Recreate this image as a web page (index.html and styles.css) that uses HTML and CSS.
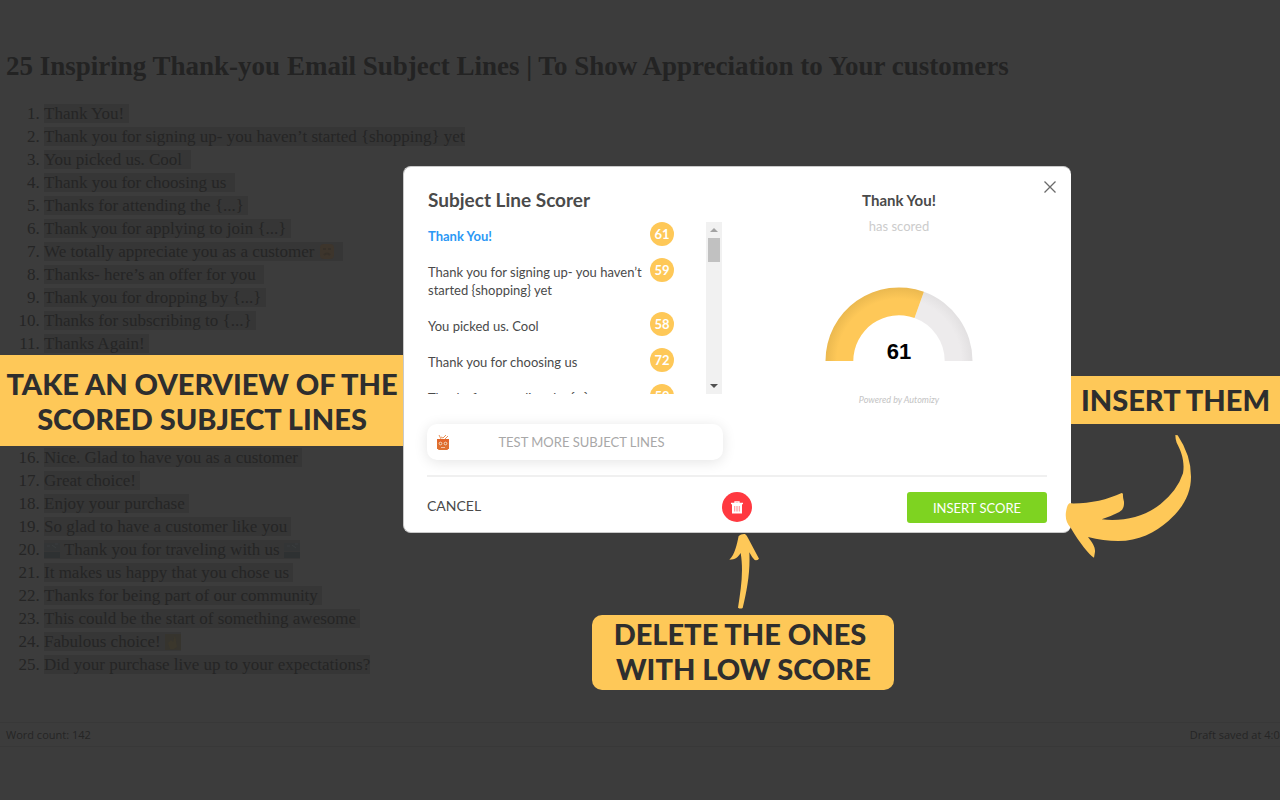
FILE: index.html
```html
<!DOCTYPE html>
<html lang="en">
<head>
<meta charset="utf-8">
<title>Subject Line Scorer</title>
<link rel="stylesheet" href="styles.css">
</head>
<body>
<main class="editor">
  <h1 class="post-title">25 Inspiring Thank-you Email Subject Lines | To Show Appreciation to Your customers</h1>
  <ol class="lines">
    <li><span class="mark">Thank You! </span></li>
    <li><span class="mark">Thank you for signing up- you haven’t started {shopping} yet</span></li>
    <li><span class="mark">You picked us. Cool&nbsp; </span></li>
    <li><span class="mark">Thank you for choosing us&nbsp; </span></li>
    <li><span class="mark">Thanks for attending the {...} </span></li>
    <li><span class="mark">Thank you for applying to join {...} </span></li>
    <li><span class="mark">We totally appreciate you as a customer <svg class="emoji" viewBox="0 0 16 16" aria-hidden="true"><rect x="1" width="14" height="15" rx="4" fill="#3d352c"/><path d="M4 5h3M9 5h3M5 11q3-3 6 0" stroke="#363029" stroke-width="2" fill="none"/></svg>&nbsp; </span></li>
    <li><span class="mark">Thanks- here’s an offer for you&nbsp; </span></li>
    <li><span class="mark">Thank you for dropping by {...} </span></li>
    <li><span class="mark">Thanks for subscribing to {...} </span></li>
    <li><span class="mark">Thanks Again! </span></li>
  </ol>
  <p class="callout callout-overview">TAKE AN OVERVIEW OF THE<br>SCORED SUBJECT LINES</p>
  <ol class="lines" start="16">
    <li><span class="mark">Nice. Glad to have you as a customer </span></li>
    <li><span class="mark">Great choice! </span></li>
    <li><span class="mark">Enjoy your purchase </span></li>
    <li><span class="mark">So glad to have a customer like you </span></li>
    <li><span class="mark"><svg class="emoji" viewBox="0 0 16 16" aria-hidden="true"><path d="M0 1h16v8H0z" fill="#333536"/><path d="M0 10h16v6H0z" fill="#2e3132"/><path d="M3 4h3M8 3l4 3M11 2h3" stroke="#3a3d3e"/></svg> Thank you for traveling with us <svg class="emoji" viewBox="0 0 16 16" aria-hidden="true"><path d="M0 1h16v8H0z" fill="#333536"/><path d="M0 10h16v6H0z" fill="#2e3132"/><path d="M3 4h3M8 3l4 3M11 2h3" stroke="#3a3d3e"/></svg></span></li>
    <li><span class="mark">It makes us happy that you chose us </span></li>
    <li><span class="mark">Thanks for being part of our community </span></li>
    <li><span class="mark">This could be the start of something awesome </span></li>
    <li><span class="mark">Fabulous choice! <svg class="emoji" viewBox="0 0 16 16" aria-hidden="true"><path d="M0 0h16v16H0z" fill="#36342e"/><path d="M10 1l1 6 1 6-3 2H5L3 9l3-3 2 2z" fill="#3b372c"/></svg></span></li>
    <li><span class="mark">Did your purchase live up to your expectations?</span></li>
  </ol>
</main>
<footer class="status">
  <span>Word count: 142</span>
  <span class="saved">Draft saved at 4:04</span>
</footer>

<section class="modal" role="dialog" aria-labelledby="modal-title">
  <button class="close" type="button" aria-label="Close"><svg viewBox="0 0 12 12" aria-hidden="true"><path d="M.5.5l11 11M11.5.5l-11 11" stroke="#6b6b6b" stroke-width="1.3" fill="none"/></svg></button>
  <div class="columns">
    <div class="scores">
      <h2 id="modal-title" class="modal-title">Subject Line Scorer</h2>
      <div class="scroller">
        <ul class="score-list">
          <li class="score active"><span class="subject">Thank You!</span><span class="badge">61</span></li>
          <li class="score"><span class="subject">Thank you for signing up- you haven’t started {shopping} yet</span><span class="badge">59</span></li>
          <li class="score"><span class="subject">You picked us. Cool</span><span class="badge">58</span></li>
          <li class="score"><span class="subject">Thank you for choosing us</span><span class="badge">72</span></li>
          <li class="score"><span class="subject">Thanks for attending the {...}</span><span class="badge">59</span></li>
        </ul>
        <div class="scrollbar" aria-hidden="true">
          <span class="arrow-up"></span><span class="thumb"></span><span class="arrow-down"></span>
        </div>
      </div>
      <button class="test-more" type="button">
        <svg class="robot" viewBox="0 0 14 17" aria-hidden="true"><path d="M5 5L3 1M9 5l3-3M5 3l2 1 3-3" stroke="#e9935c" fill="none"/><path d="M1 5h12v5H1z" fill="#e2662a"/><path d="M2 9h10v6a1 1 0 0 1-1 1H3a1 1 0 0 1-1-1z" fill="#df7330"/><path d="M1 8h12v7H1z" fill="#df7030"/><circle cx="4.500" cy="9.500" r="1.300" fill="#c9641f" stroke="#fbe3d3" stroke-width=".9"/><circle cx="9.500" cy="9.500" r="1.300" fill="#c9641f" stroke="#fbe3d3" stroke-width=".9"/><path d="M5 13.500h4" stroke="#f3c3a4"/></svg>
        <span class="test-label">TEST MORE SUBJECT LINES</span>
      </button>
    </div>
    <div class="result">
      <h3 class="result-title">Thank You!</h3>
      <p class="result-note">has scored</p>
      <svg class="gauge" viewBox="0 0 148 76" role="img" aria-label="Score 61">
        <defs>
          <radialGradient id="gold" gradientUnits="userSpaceOnUse" cx="74" cy="75" r="74"><stop offset=".84" stop-color="#fec858"/><stop offset="1" stop-color="#eab84f"/></radialGradient>
          <radialGradient id="grey" gradientUnits="userSpaceOnUse" cx="74" cy="75" r="74"><stop offset=".84" stop-color="#edebec"/><stop offset="1" stop-color="#e2e0e1"/></radialGradient>
        </defs>
        <path d="M98.900 5.800A73.500 73.500 0 0 1 147.500 75H119.700A45.700 45.700 0 0 0 89.500 32z" fill="url(#grey)"/>
        <path d="M.5 75A73.500 73.500 0 0 1 98.900 5.800L89.500 32A45.700 45.700 0 0 0 28.300 75z" fill="url(#gold)"/>
        <text x="74" y="73" text-anchor="middle" class="gauge-value">61</text>
      </svg>
      <p class="powered">Powered by Automizy</p>
    </div>
  </div>
  <div class="actions">
    <button class="cancel" type="button">CANCEL</button>
    <button class="delete" type="button" aria-label="Delete"><svg viewBox="0 0 12 13" aria-hidden="true"><path d="M4 2V.8h4V2M0 2.500h12" stroke="#fff" stroke-width="1.300" fill="none"/><path d="M1 3h10v9.500H1z" fill="#fff"/><path d="M3.500 5v5.500M5.200 5v5.500M6.800 5v5.500M8.500 5v5.500" stroke="#ff8f93" stroke-width=".8"/></svg></button>
    <button class="insert" type="button">INSERT SCORE</button>
  </div>
</section>

<p class="callout callout-insert">INSERT THEM</p>
<svg class="arrow-insert" viewBox="75 222 381 375" aria-hidden="true"><path d="M406 225L413 226Q453 286 453 350C453 400 430 443 386 482C345 518 295 543 235 543Q190 543 144 531C157 548 166 560 165 575L162 593C147 584 120 550 92 503Q72 482 79 450Q82 434 88 430C145 432 200 420 245 399L249 401Q248 413 252 425C253 440 249 449 238 456Q215 468 185 478C250 486 315 469 361 433Q412 392 429 340C435 305 424 274 410 248Q406 237 406 225Z" fill="#fec858"/></svg>
<svg class="arrow-delete" viewBox="444 159 96 228" aria-hidden="true"><path d="M476 168Q483 161 495 162Q501 166 504 174L537 236Q532 242 524 240Q515 231 508 217C511 276 501 330 488 384Q481 388 474 383C483 325 491 275 482 219C474 232 466 239 448 239C465 225 471 190 476 168Z" fill="#fec858"/></svg>
<p class="callout callout-delete">DELETE THE ONES<br>&nbsp;WITH LOW SCORE</p>
</body>
</html>
```
FILE: styles.css
```css
* { box-sizing: border-box; }
body {
  margin: 0;
  min-height: 100vh;
  position: relative;
  overflow: hidden;
  background: #3c3c3c;
  color: #252525;
  font-family: "Liberation Serif", serif;
}
h1, h2, h3, p, ol, ul { margin: 0; padding: 0; }
button { border: 0; padding: 0; background: none; font-family: Lato, sans-serif; cursor: pointer; }

/* Editor behind the dialog */
.editor { padding-top: 50px; }
.post-title { padding-left: 6px; font-size: 27px; line-height: 32px; white-space: nowrap; color: #232323; }
.lines { padding-left: 44px; font-size: 17px; line-height: 23px; }
.post-title + .lines { margin-top: 20px; }
.lines li { white-space: pre; }
.mark { background: #363636; }
.emoji { width: 16px; height: 16px; vertical-align: -3px; }
.status {
  display: flex;
  justify-content: space-between;
  margin-top: 46px;
  padding: 0 6px;
  border: solid #383838;
  border-width: 1px 0;
  font: 11px/23px "Open Sans", sans-serif;
  white-space: nowrap;
}
.saved { margin-right: -12px; }

/* Annotation labels */
.callout {
  background: #fec858;
  color: #2e2e2e;
  font: 900 29px/35px Lato, sans-serif;
  text-align: center;
  white-space: nowrap;
}
.callout-overview { width: 404px; padding: 11px 0 10px; }
.callout-insert { position: absolute; left: 1071px; right: 0; top: 376px; padding: 6px 0 7px; }
.callout-delete { position: absolute; left: 592px; top: 615px; width: 302px; padding: 1px 6px 4px 0; border-radius: 10px; }
.arrow-insert { position: absolute; left: 1065px; top: 434px; width: 127px; height: 125px; }
.arrow-delete { position: absolute; left: 728px; top: 533px; width: 32px; height: 76px; }

/* Dialog */
.modal {
  position: absolute;
  left: 403px;
  top: 166px;
  width: 668px;
  padding: 21px 24px 9px 23px;
  border: 1px solid #c9c9c9;
  border-width: 1px 0 1px 1px;
  border-radius: 8px;
  background: #fff;
  color: #4a4a4a;
  font-family: Lato, sans-serif;
}
.close { position: absolute; right: 15px; top: 14px; width: 12px; height: 12px; line-height: 0; }
.close svg { width: 12px; height: 12px; }
.columns { display: grid; grid-template-columns: 1fr 1fr; gap: 28px; padding-bottom: 15px; border-bottom: 2px solid #f0f0f0; }
.modal-title { padding-left: 1px; font-size: 19px; line-height: 24px; }
.scroller { display: flex; justify-content: space-between; height: 172px; margin-top: 10px; padding: 0 1px; overflow: hidden; }
.score-list { list-style: none; width: 246px; }
.score { display: flex; justify-content: space-between; align-items: flex-start; font-size: 13px; line-height: 18px; }
.subject { width: 220px; padding: 5px 0 13px; }
.active .subject { color: #2b98f5; font-weight: 700; }
.badge { width: 24px; border-radius: 12px; background: #fec858; color: #fff; text-align: center; line-height: 24px; font-weight: 700; }
.scrollbar { display: flex; flex-direction: column; align-items: center; width: 16px; padding: 6px 0; background: #f1f1f1; }
.arrow-up, .arrow-down { border: solid transparent; border-width: 0 4px; }
.arrow-up { border-bottom: 4px solid #a3a3a3; }
.arrow-down { margin-top: auto; border-top: 4px solid #505050; }
.thumb { width: 12px; height: 24px; margin-top: 6px; background: #c1c1c1; }
.test-more {
  display: flex;
  align-items: center;
  width: 100%;
  height: 36px;
  margin-top: 30px;
  padding: 0 10px 0 9px;
  border-radius: 10px;
  background: #fff;
  box-shadow: 0 2px 14px rgba(0, 0, 0, .11);
  color: #a8a8a8;
  font-size: 13px;
}
.robot { width: 14px; height: 17px; }
.test-label { flex: 1; }
.result { display: flex; flex-direction: column; align-items: center; }
.result-title { font-size: 15px; line-height: 24px; }
.result-note { margin-top: 4px; font-size: 13px; line-height: 20px; color: #ccc; }
.gauge { width: 148px; height: 76px; margin-top: 50px; }
.gauge-value { font: bold 22px "Liberation Sans", sans-serif; fill: #000; }
.powered { margin-top: 32px; font-size: 9px; line-height: 12px; font-style: italic; color: #c4c4c4; }
.actions { display: flex; align-items: flex-start; justify-content: space-between; padding-top: 15px; }
.cancel { width: 140px; text-align: left; font-size: 14px; line-height: 28px; color: #4a4a4a; }
.delete { display: flex; align-items: center; justify-content: center; width: 30px; height: 30px; border-radius: 50%; background: #ff3940; }
.delete svg { width: 12px; height: 13px; }
.insert { width: 140px; height: 31px; border-radius: 3px; background: #7ed321; color: #fff; font-size: 13px; }
```
